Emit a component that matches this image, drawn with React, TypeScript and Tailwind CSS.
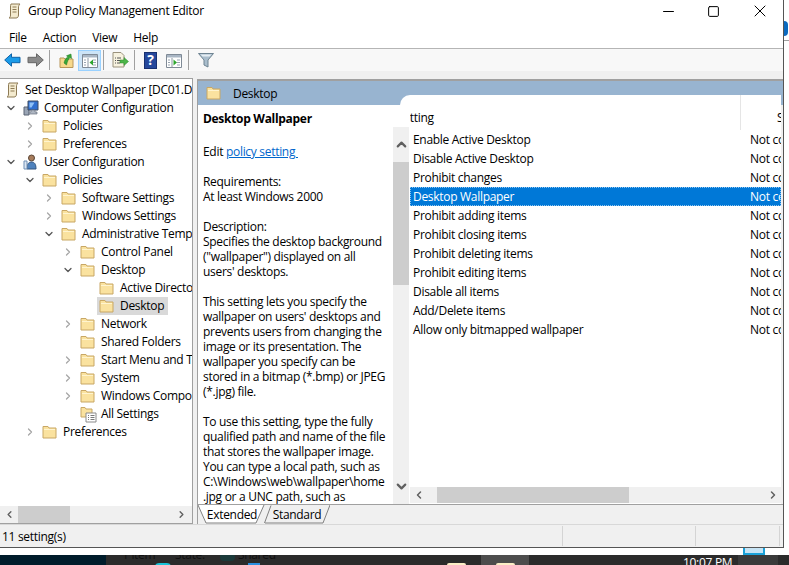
import { ChevronDown, ChevronLeft, ChevronRight, ChevronUp, Minus, Square, X } from "lucide-react";

type TreeRow = {
  label: string;
  level: 0 | 1 | 2 | 3 | 4;
  arrow?: "open" | "closed";
  icon?: "computer" | "user" | "settings";
  selected?: boolean;
};

const treeRows: TreeRow[] = [
  { label: "Computer Configuration", level: 0, arrow: "open", icon: "computer" },
  { label: "Policies", level: 1, arrow: "closed" },
  { label: "Preferences", level: 1, arrow: "closed" },
  { label: "User Configuration", level: 0, arrow: "open", icon: "user" },
  { label: "Policies", level: 1, arrow: "open" },
  { label: "Software Settings", level: 2, arrow: "closed" },
  { label: "Windows Settings", level: 2, arrow: "closed" },
  { label: "Administrative Templates", level: 2, arrow: "open" },
  { label: "Control Panel", level: 3, arrow: "closed" },
  { label: "Desktop", level: 3, arrow: "open" },
  { label: "Active Directory", level: 4 },
  { label: "Desktop", level: 4, selected: true },
  { label: "Network", level: 3, arrow: "closed" },
  { label: "Shared Folders", level: 3 },
  { label: "Start Menu and Taskbar", level: 3, arrow: "closed" },
  { label: "System", level: 3, arrow: "closed" },
  { label: "Windows Components", level: 3, arrow: "closed" },
  { label: "All Settings", level: 3, icon: "settings" },
  { label: "Preferences", level: 1, arrow: "closed" },
];

const levelPadding = {
  0: "pl-[4px]",
  1: "pl-[23px]",
  2: "pl-[42px]",
  3: "pl-[61px]",
  4: "pl-[80px]",
};

const settings = [
  "Enable Active Desktop",
  "Disable Active Desktop",
  "Prohibit changes",
  "Desktop Wallpaper",
  "Prohibit adding items",
  "Prohibit closing items",
  "Prohibit deleting items",
  "Prohibit editing items",
  "Disable all items",
  "Add/Delete items",
  "Allow only bitmapped wallpaper",
];

const description = [
  ["Requirements:", "At least Windows 2000"],
  [
    "Description:",
    "Specifies the desktop background",
    '("wallpaper") displayed on all',
    "users' desktops.",
  ],
  [
    "This setting lets you specify the",
    "wallpaper on users' desktops and",
    "prevents users from changing the",
    "image or its presentation. The",
    "wallpaper you specify can be",
    "stored in a bitmap (*.bmp) or JPEG",
    "(*.jpg) file.",
  ],
  [
    "To use this setting, type the fully",
    "qualified path and name of the file",
    "that stores the wallpaper image.",
    "You can type a local path, such as",
    "C:\\Windows\\web\\wallpaper\\home",
    ".jpg or a UNC path, such as",
  ],
];

const Folder = () => (
  <svg width="15" height="14" viewBox="0 0 15 14" className="shrink-0">
    <path d="M1 3V1.500h5L7 3h7v10H1z" fill="#fae29f" stroke="#c8a765" />
    <path d="M2 4h11v1H2z" fill="#fff4cf" />
  </svg>
);

const ScrollIcon = () => (
  <svg width="15" height="16" viewBox="0 0 15 16" className="shrink-0">
    <path d="M4 1h9c-1 1-1.500 2-1.500 3v8c0 2-1 3-2.500 3H2c1-.7 1.500-1.500 1.500-3V4C3.500 3 3.500 2 4 1z" fill="#f4ebcf" stroke="#8d7a55" />
    <path d="M5.500 4h4M5.500 6.500h4M5.500 9h4" stroke="#8d7a55" />
  </svg>
);

const ComputerIcon = () => (
  <svg width="16" height="16" viewBox="0 0 16 16" className="shrink-0">
    <path d="M1 7h5v8H1z" fill="#9aa5b5" stroke="#5a6475" />
    <path d="M5 1h10v9H5z" fill="#2f6fd0" stroke="#3d4a60" />
    <path d="M6.500 2.500h5l-3 5h-2z" fill="#8fc0f5" />
    <path d="M8 10h4v2h2v2H6v-2h2z" fill="#aeb6c2" stroke="#6a7382" strokeWidth=".7" />
  </svg>
);

const UserIcon = () => (
  <svg width="16" height="16" viewBox="0 0 16 16" className="shrink-0">
    <circle cx="8.500" cy="4" r="3" fill="#a77c5c" stroke="#5b4636" />
    <path d="M4 15c0-5 1.500-7 4.500-7s4.500 2 4.500 7z" fill="#4f82bd" stroke="#33557f" />
    <path d="M1 7h3v8H1z" fill="#dce6f2" stroke="#6f8fb5" />
  </svg>
);

const SettingsIcon = () => (
  <svg width="17" height="17" viewBox="0 0 17 17" className="shrink-0">
    <path d="M1 3V1.500h4L6 3h6v8H1z" fill="#fae29f" stroke="#c8a765" />
    <path d="M6 7h10v9H6z" fill="#fff" stroke="#8a8a8a" />
    <path d="M8 9.500h1M8 11.500h1M8 13.500h1M10.500 9.500h4M10.500 11.500h4M10.500 13.500h4" stroke="#7a7a7a" />
  </svg>
);

const FlatArrow = ({ fill, stroke, flip }: { fill: string; stroke: string; flip?: boolean }) => (
  <svg width="17" height="14" viewBox="0 0 17 14" className={flip ? "shrink-0 -scale-x-100" : "shrink-0"}>
    <path d="M.7 7 7.500 .8v3.500H16v5.400H7.500v3.500z" fill={fill} stroke={stroke} />
  </svg>
);

const PaneIcon = ({ arrowLeft }: { arrowLeft?: boolean }) => (
  <svg width="16" height="15" viewBox="0 0 16 15" className="shrink-0">
    <path d="M.5 1.500h15v13H.5z" fill="#fff" stroke="#7f8a96" />
    <path d="M1 2h14v2.500H1z" fill="#a9b6c4" />
    <path d="M6 5v9" stroke="#8d98a4" />
    <path d="M2 7h2M2 9.500h2M2 12h2M11 7h3M11 9.500h3M11 12h3" stroke="#97a3af" />
    <path d={arrowLeft ? "M11 6.500v6L7.500 9.500z" : "M7.500 6.500v6L11 9.500z"} fill="#2da52d" />
  </svg>
);

const Separator = () => <div className="w-px h-[20px] bg-[#a0a0a0]" />;

const Toolbar = () => (
  <div className="h-[22px] flex items-center pl-[4px] bg-[#f8f8f8] shrink-0">
    <FlatArrow fill="#1b9be8" stroke="#0f63a8" />
    <div className="ml-[6px]">
      <FlatArrow fill="#8a8a8a" stroke="#666666" flip />
    </div>
    <div className="ml-[5px]">
      <Separator />
    </div>
    <svg width="15" height="15" viewBox="0 0 15 15" className="ml-[9px] shrink-0">
      <path d="M1 5h4l1 1h8v8.500H1z" fill="#f7d98c" stroke="#b9975a" />
      <path d="M5 10c1-4 2-5 4-6L7.500 2.800 12 1l.5 4.500-1.500-1C9.500 6 8.500 8 7.500 12z" fill="#38a538" stroke="#1f7a1f" strokeWidth=".5" />
    </svg>
    <div className="ml-[4px] w-[23px] h-[21px] flex items-center justify-center bg-[#cce4f7] border border-[#99d1ff]">
      <PaneIcon arrowLeft />
    </div>
    <div className="ml-[2px]">
      <Separator />
    </div>
    <svg width="17" height="16" viewBox="0 0 17 16" className="ml-[8px] shrink-0">
      <path d="M1 .5h8l3 3V15H1z" fill="#f7f2df" stroke="#9a927c" />
      <path d="M3 6h1M3 8.500h1M3 11h1M5 6h4M5 8.500h3M5 11h3" stroke="#555555" />
      <path d="M8 8h4V5.500L16.500 9.500 12 13.500V11H8z" fill="#4cb548" stroke="#2c8a2a" strokeWidth=".5" />
    </svg>
    <div className="ml-[5px]">
      <Separator />
    </div>
    <div className="ml-[9px] w-[13px] h-[17px] bg-[#25489c] border border-[#183070] flex items-center justify-center text-white text-[14px] font-bold leading-none">
      ?
    </div>
    <div className="ml-[9px]">
      <PaneIcon />
    </div>
    <div className="ml-[6px]">
      <Separator />
    </div>
    <svg width="16" height="16" viewBox="0 0 16 16" className="ml-[9px] shrink-0">
      <path d="M.5 1.500h15L10 8v7l-4-2V8z" fill="#a9bdcc" stroke="#6f8492" />
      <path d="M2.500 2.500h11L11.500 4.500h-7z" fill="#e6eef3" />
    </svg>
  </div>
);

const Tree = () => (
  <div className="w-[193px] flex flex-col bg-white border-t border-r border-b border-[#a0a0a0]">
    <div className="flex-1 overflow-hidden pt-[2px]">
      <div className="h-[18px] flex items-center pl-[5px] gap-[5px] whitespace-nowrap">
        <ScrollIcon />
        <span>Set Desktop Wallpaper [DC01.DOMAIN</span>
      </div>
      {treeRows.map((row, i) => (
        <div key={i} className={`h-[18px] flex items-center whitespace-nowrap ${levelPadding[row.level]}`}>
          <span className="w-[14px] shrink-0 flex justify-center">
            {row.arrow === "open" && <ChevronDown size={12} strokeWidth={2.5} className="text-[#555555]" />}
            {row.arrow === "closed" && <ChevronRight size={12} strokeWidth={2.5} className="text-[#a6a6a6]" />}
          </span>
          <span className={`flex items-center ${row.selected ? "ml-[3px] pl-[2px] pr-[4px] bg-[#d9d9d9]" : "ml-[5px]"}`}>
            <span className="w-[21px] shrink-0">
              {row.icon === "computer" && <ComputerIcon />}
              {row.icon === "user" && <UserIcon />}
              {row.icon === "settings" && <SettingsIcon />}
              {!row.icon && <Folder />}
            </span>
            <span>{row.label}</span>
          </span>
        </div>
      ))}
    </div>
    <div className="h-[17px] flex items-center bg-[#f0f0f0] shrink-0">
      <ChevronLeft size={11} strokeWidth={3} className="ml-[4px] text-[#606060]" />
      <div className="ml-[3px] w-[52px] h-full bg-[#cdcdcd]" />
      <ChevronRight size={11} strokeWidth={3} className="ml-auto mr-[5px] text-[#606060]" />
    </div>
  </div>
);

const DescriptionPane = () => (
  <div className="w-[212px] flex bg-white">
    <div className="w-[195px] pl-[5px] pt-[6px] leading-[15px] whitespace-nowrap overflow-hidden">
      <div className="font-bold">Desktop Wallpaper</div>
      <div className="mt-[18px] whitespace-pre">
        Edit <span className="text-[#0066cc] underline">policy setting </span>
      </div>
      {description.map((block, i) => (
        <div key={i} className="mt-[15px]">
          {block.map((line) => (
            <div key={line}>{line}</div>
          ))}
        </div>
      ))}
    </div>
    <div className="relative z-10 w-[16px] mt-[22px] bg-[#f0f0f0] flex flex-col">
      <div className="h-[35px] flex items-center justify-center">
        <ChevronUp size={15} strokeWidth={3.5} className="text-[#606060]" />
      </div>
      <div className="h-[123px] bg-[#cdcdcd]" />
      <div className="mt-auto h-[35px] flex items-center justify-center">
        <ChevronDown size={15} strokeWidth={3.5} className="text-[#606060]" />
      </div>
    </div>
  </div>
);

const SettingsList = () => (
  <div className="flex-1 min-w-0 -mt-[10px] -ml-[10px] pl-[10px] rounded-tl-[10px] bg-white flex flex-col">
    <div className="h-[35px] flex items-center overflow-hidden shrink-0">
      <div className="w-[331px] shrink-0 h-full flex items-center overflow-hidden border-r border-[#e5e5e5]">
        <span className="-ml-[13px] mt-[10px]">Setting</span>
      </div>
      <span className="ml-[36px] mt-[10px]">State</span>
    </div>
    <div className="flex-1 overflow-hidden">
      {settings.map((name) => (
        <div
          key={name}
          className={`h-[19px] flex items-center whitespace-nowrap overflow-hidden ${
            name === "Desktop Wallpaper"
              ? "bg-[#0078d7] text-white border border-dotted border-[#8cc4f0] pl-[2px]"
              : "pl-[3px]"
          }`}
        >
          <span className="w-[337px] shrink-0">{name}</span>
          <span>Not configured</span>
        </div>
      ))}
    </div>
    <div className="h-[16px] mb-[1px] flex items-center bg-[#f0f0f0] shrink-0">
      <ChevronLeft size={12} strokeWidth={3} className="ml-[3px] text-[#606060]" />
      <div className="ml-[12px] w-[192px] h-full bg-[#cdcdcd]" />
      <ChevronRight size={12} strokeWidth={3} className="ml-auto mr-[2px] text-[#606060]" />
    </div>
  </div>
);

const Tabs = () => (
  <div className="h-[20px] flex bg-[#f0f0f0] border-t border-[#a0a0a0] shrink-0">
    <div className="relative w-[68px] h-full flex items-center justify-center pt-[1px]">
      <svg width="68" height="19" viewBox="0 0 68 19" className="absolute inset-0">
        <path d="M0 0l8 18h50l8-18" fill="#fff" stroke="#808080" />
      </svg>
      <span className="relative">Extended</span>
    </div>
    <div className="relative w-[66px] -ml-[2px] h-full flex items-center justify-center pt-[1px]">
      <svg width="66" height="19" viewBox="0 0 66 19" className="absolute inset-0">
        <path d="M.5 18 7 .5M59 18h-58M59 18l7-18" fill="none" stroke="#808080" />
      </svg>
      <span className="relative">Standard</span>
    </div>
  </div>
);

const StatusBar = () => (
  <div className="h-[23px] flex items-stretch bg-[#f0f0f0] border-t border-[#d8d8d8] shrink-0">
    <span className="w-[562px] pl-[2px] pt-[1px] flex items-center">11 setting(s)</span>
    <div className="w-[133px] border-l border-[#d4d4d4] my-[1px]" />
    <div className="w-[85px] border-l border-[#d4d4d4] border-r my-[1px]" />
  </div>
);

const Taskbar = () => (
  <div className="h-[10px] flex bg-[#2b2b2b] overflow-hidden">
    <div className="w-[106px] bg-[#001c2b]" />
    <div className="w-[375px] relative flex pl-[16px] text-[#111111]">
      <span className="w-[53px] -mt-[9px]">1 item</span>
      <span className="-mt-[9px]">State:</span>
      <span className="ml-[15px] w-[15px] h-[8px] rounded-[4px] mt-[-2px] bg-[#1b3a3a]" />
      <span className="ml-[3px] -mt-[9px]">Shared</span>
      {/* taskbar icons, only their tops show */}
      <span className="absolute left-[49px] top-[8px] w-[16px] h-[8px] rounded-full bg-[#19c3d8]" />
      <span className="absolute left-[142px] top-[8px] w-[12px] h-[4px] bg-[#2a8fe0]" />
      <span className="absolute left-[341px] top-[8px] w-[19px] h-[4px] rounded-t-[2px] bg-[#fbeec6]" />
    </div>
    <div className="w-[48px] flex justify-center bg-[#4d4d4d]">
      <span className="mt-[8px] w-[19px] h-[4px] rounded-t-[2px] bg-[#fbeec6]" />
    </div>
    <div className="w-[154px]" />
    <div className="w-[55px] shrink-0 whitespace-nowrap text-white -mt-[1px]">10:07 PM</div>
    <div className="w-[40px] bg-[#3a3a3a]" />
  </div>
);

const App = () => (
  <div className="w-[789px] h-[565px] flex flex-col overflow-hidden bg-white text-[12px] tracking-[-0.3px] text-black font-['Open_Sans',sans-serif]">
    <div className="h-[548px] flex shrink-0">
      <div className="w-[784px] flex flex-col border-r border-b border-[#555555]">
        <div className="h-[22px] flex items-center pl-[7px] shrink-0">
          <ScrollIcon />
          <span className="ml-[6px]">Group Policy Management Editor</span>
          <Minus size={17} strokeWidth={1} absoluteStrokeWidth className="ml-auto text-black" />
          <Square size={13} strokeWidth={1} absoluteStrokeWidth className="ml-[30px] text-black" />
          <X size={20} strokeWidth={1} absoluteStrokeWidth className="ml-[30px] mr-[13px] text-black" />
        </div>
        <div className="mt-[5px] h-[22px] flex items-center pl-[9px] gap-[16px] border-b border-[#b5b5b5] shrink-0">
          <span>File</span>
          <span>Action</span>
          <span>View</span>
          <span>Help</span>
        </div>
        <Toolbar />
        <div className="flex-1 min-h-0 flex flex-col bg-[#f0f0f0]">
          <div className="flex-1 min-h-0 flex pt-[7px]">
            <Tree />
            <div className="mt-[1px] ml-[4px] flex-1 min-w-0 flex flex-col border-t-2 border-l border-[#a0a0a0]">
              <div className="h-[24px] flex items-center pl-[8px] gap-[12px] bg-[#98b4d0] shrink-0">
                <Folder />
                <span className="pt-[1px]">Desktop</span>
              </div>
              <div className="flex-1 min-h-0 flex mr-[2px]">
                <DescriptionPane />
                <SettingsList />
              </div>
              <Tabs />
            </div>
          </div>
          <StatusBar />
        </div>
      </div>
      <div className="w-[5px] flex flex-col">
        <div className="mt-[21px] w-[4px] h-[15px] rounded-r-full bg-[#0b6abf]" />
        <div className="mt-[4px] h-px bg-[#a0a0a0]" />
      </div>
    </div>
    <div className="h-[7px] bg-white shrink-0 flex">
      <div className="ml-[743px] w-[22px] bg-[#c7e4f5] border-x-2 border-b-2 border-[#1aa1d8]" />
    </div>
    <Taskbar />
  </div>
);

export default App;
